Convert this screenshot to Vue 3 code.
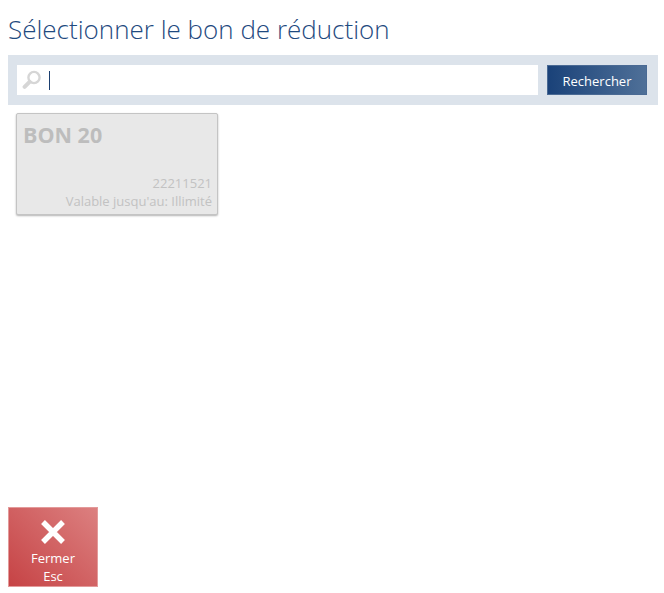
<template>
  <div class="page">
    <h1 class="title">Sélectionner le bon de réduction</h1>

    <div class="search-bar">
      <div class="search-box">
        <svg class="search-icon" width="20" height="20" viewBox="0 0 20 20">
          <circle cx="12" cy="7.5" r="5.6" fill="none" stroke="#d6d6d6" stroke-width="2.4" />
          <path d="M7.6 11.8 L2.6 16.8" stroke="#d6d6d6" stroke-width="4" stroke-linecap="round" />
        </svg>
        <span class="caret"></span>
      </div>
      <button class="search-btn" type="button">Rechercher</button>
    </div>

    <div class="vouchers">
      <div class="voucher">
        <div class="voucher-name">{{ voucher.name }}</div>
        <div class="voucher-code">{{ voucher.code }}</div>
        <div class="voucher-valid">Valable jusqu'au: {{ voucher.validUntil }}</div>
      </div>
    </div>

    <button class="close-btn" type="button">
      <svg width="26" height="26" viewBox="0 0 26 26">
        <path d="M3 3 L23 23 M23 3 L3 23" stroke="#fff" stroke-width="5.4" />
      </svg>
      <span class="close-label">Fermer</span>
      <span class="close-key">Esc</span>
    </button>
  </div>
</template>

<script setup>
const voucher = {
  name: 'BON 20',
  code: '22211521',
  validUntil: 'Illimité'
}
</script>

<style scoped>
.page {
  height: 593px;
  box-sizing: border-box;
  padding: 11px 6px 6px 8px;
  display: flex;
  flex-direction: column;
  font-family: "Open Sans", "Noto Sans", sans-serif;
}

.title {
  margin: 0;
  height: 44px;
  font-size: 26px;
  line-height: 36px;
  font-weight: 300;
  color: #1f4a80;
}

.search-bar {
  height: 50px;
  box-sizing: border-box;
  padding: 10px 11px 10px 9px;
  display: flex;
  gap: 9px;
  background: #dce3eb;
}

.search-box {
  flex: 1;
  display: flex;
  align-items: center;
  padding-left: 5px;
  background: #fff;
}

.search-icon {
  flex-shrink: 0;
}

.caret {
  width: 1px;
  height: 19px;
  margin-left: 7px;
  background: #1c3f70;
}

.search-btn {
  width: 100px;
  padding: 2px 0 0;
  border: 1px solid #4a6a94;
  background: linear-gradient(90deg, #1a4279, #4f7098);
  color: #fff;
  font-family: inherit;
  font-size: 13px;
}

.vouchers {
  flex: 1;
  padding: 8px 0 0 8px;
}

.voucher {
  width: 202px;
  height: 102px;
  box-sizing: border-box;
  padding: 6px 5px 0 6px;
  background: #e8e8e8;
  border: 1px solid #c4c4c4;
  border-radius: 2px;
  box-shadow: 0 1px 2px rgba(0, 0, 0, 0.3);
  color: #c2c2c2;
  text-align: right;
  font-size: 13px;
  line-height: 18px;
}

.voucher-name {
  height: 54px;
  text-align: left;
  font-size: 21.5px;
  line-height: 30px;
  font-weight: 700;
  color: #bdbdbd;
}

.close-btn {
  width: 90px;
  height: 80px;
  padding: 11px 0 0;
  display: flex;
  flex-direction: column;
  align-items: center;
  border: 1px solid #e39a9a;
  background: linear-gradient(45deg, #c64345, #dc8080);
  color: #fff;
  font-family: inherit;
  font-size: 13px;
  line-height: 18px;
}

.close-label {
  margin-top: 4px;
}

.close-key {
  margin-top: 0;
}
</style>
